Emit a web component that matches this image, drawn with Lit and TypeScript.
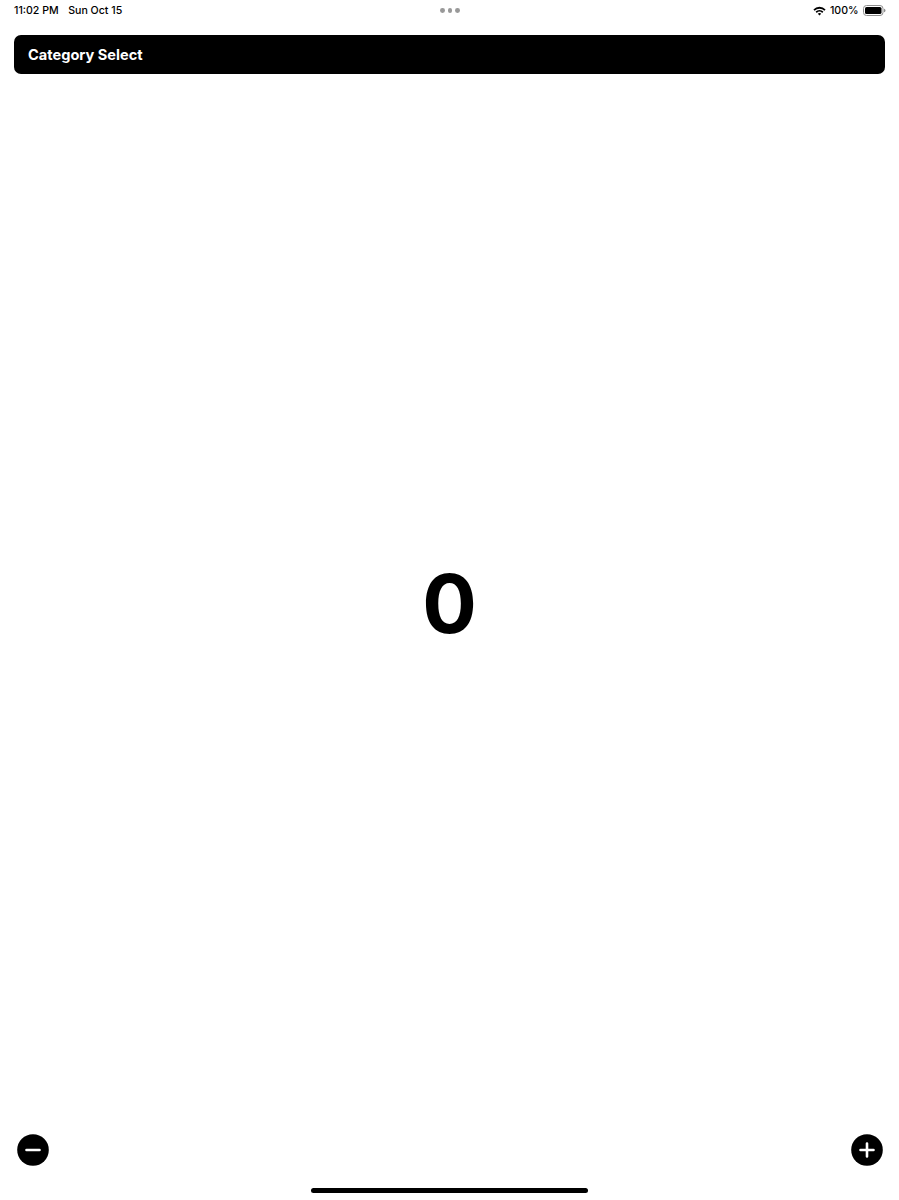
import { LitElement, html, css } from "lit";
import { customElement } from "lit/decorators.js";

@customElement("app-root")
export class AppRoot extends LitElement {
  static styles = css`
    :host {
      display: flex;
      flex-direction: column;
      width: 899px;
      height: 1200px;
      background: #fff;
      color: #000;
      font-family: Inter, "Liberation Sans", sans-serif;
      overflow: hidden;
    }
    .status {
      height: 21px;
      flex: none;
      display: grid;
      grid-template-columns: 1fr auto 1fr;
      align-items: center;
      padding: 0 13px 0 14px;
      font-size: 10.6px;
      font-weight: 500;
      line-height: 21px;
    }
    .left { display: flex; gap: 9.5px; }
    .dots { display: flex; gap: 2.5px; }
    .dots i { width: 4.8px; height: 4.8px; border-radius: 50%; background: #999; }
    .right { display: flex; justify-content: flex-end; align-items: center; gap: 3.5px; }
    .right .pct { margin-right: 1px; }
    .nav {
      flex: none;
      height: 39px;
      margin: 14px 14px 0;
      padding: 0 14px;
      display: flex;
      align-items: center;
      background: #000;
      border-radius: 7px;
      color: #fff;
      font-size: 14.6px;
      font-weight: 700;
    }
    .main {
      flex: 1;
      display: flex;
      align-items: center;
      justify-content: center;
    }
    .count { font-size: 81px; font-weight: 700; line-height: 1; }
    .actions {
      flex: none;
      display: flex;
      justify-content: space-between;
      padding: 0 16.5px;
    }
    .btn {
      width: 32px;
      height: 32px;
      padding: 0;
      border: 0;
      background: none;
      display: block;
    }
    .btn svg { display: block; }
    .home {
      flex: none;
      display: flex;
      justify-content: center;
      padding: 22px 0 7px;
    }
    .home i { width: 277px; height: 5px; border-radius: 3px; background: #000; }
  `;

  render() {
    return html`
      <div class="status">
        <div class="left"><span>11:02 PM</span><span>Sun Oct 15</span></div>
        <div class="dots"><i></i><i></i><i></i></div>
        <div class="right">
          <svg width="13" height="10" viewBox="0 0 13 10" aria-hidden="true">
            <path d="M0.4 3.4A8.6 8.6 0 0 1 12.6 3.4L11.4 4.7A6.9 6.9 0 0 0 1.6 4.7Z" fill="#000" />
            <path d="M2.6 5.6A5.5 5.5 0 0 1 10.4 5.6L9.2 6.9A3.8 3.8 0 0 0 3.8 6.9Z" fill="#000" />
            <path d="M4.8 7.8A2.4 2.4 0 0 1 8.2 7.8L6.5 9.6Z" fill="#000" />
          </svg>
          <span class="pct">100%</span>
          <svg width="23" height="11" viewBox="0 0 23 11" aria-hidden="true">
            <rect x="0.5" y="0.5" width="19.5" height="10" rx="3" fill="none" stroke="#8e8e8e" />
            <rect x="2" y="2" width="16.5" height="7" rx="1.6" fill="#000" />
            <path d="M21 3.8C22 4 22.5 4.7 22.5 5.5S22 7 21 7.2Z" fill="#8e8e8e" />
          </svg>
        </div>
      </div>
      <div class="nav">Category Select</div>
      <div class="main"><div class="count">0</div></div>
      <div class="actions">
        <button class="btn" aria-label="Decrease">
          <svg width="32" height="32" viewBox="0 0 32 32">
            <circle cx="16" cy="16" r="15.8" fill="#000" />
            <path d="M9.5 16H22.5" stroke="#fff" stroke-width="2.6" stroke-linecap="round" />
          </svg>
        </button>
        <button class="btn" aria-label="Increase">
          <svg width="32" height="32" viewBox="0 0 32 32">
            <circle cx="16" cy="16" r="15.8" fill="#000" />
            <path d="M9.5 16H22.5M16 9.5V22.5" stroke="#fff" stroke-width="2.6" stroke-linecap="round" />
          </svg>
        </button>
      </div>
      <div class="home"><i></i></div>
    `;
  }
}
